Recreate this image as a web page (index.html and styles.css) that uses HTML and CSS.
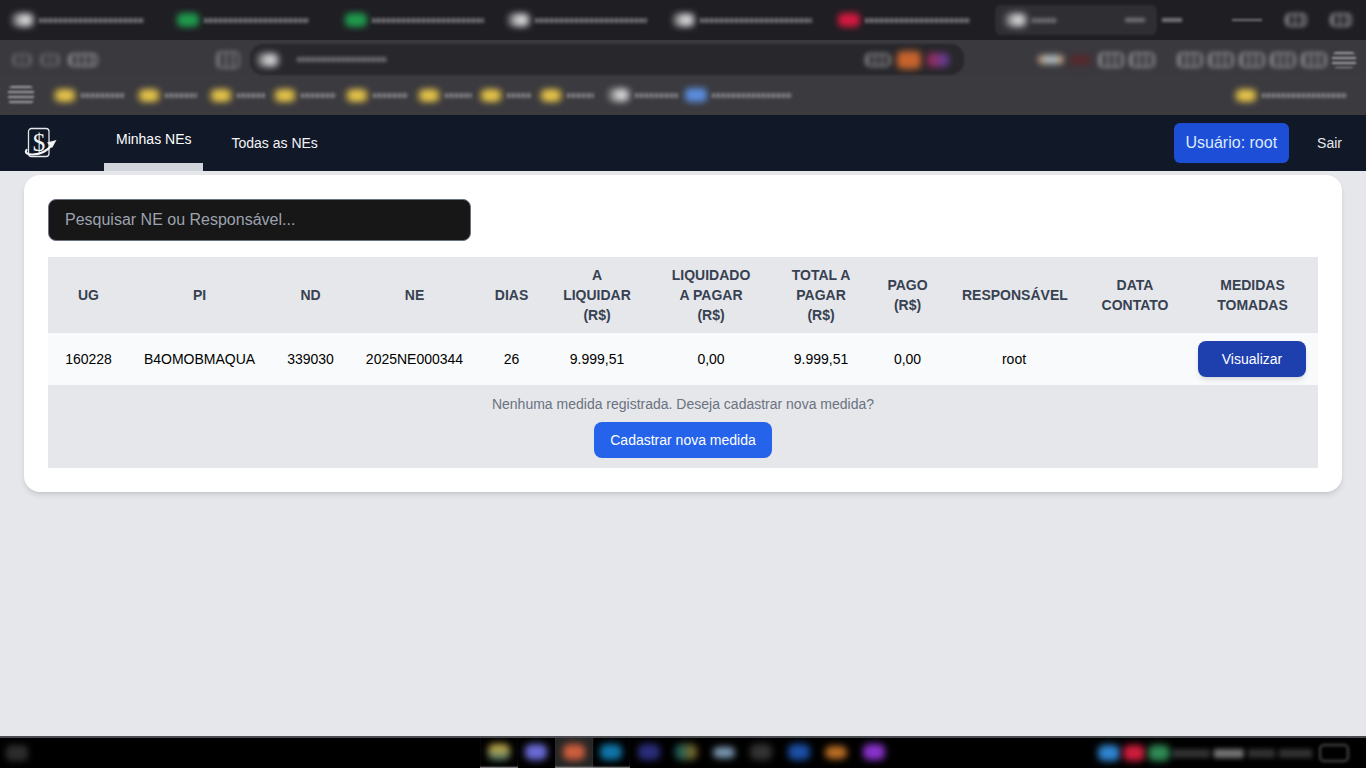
FILE: index.html
```html
<!DOCTYPE html>
<html lang="pt-BR">
<head>
<meta charset="utf-8">
<title>Minhas NEs</title>
<link rel="stylesheet" href="styles.css">
</head>
<body>
<div class="chrome" aria-hidden="true">
  <div class="tabs">
    <div class="chip"><i class="ico ring"></i><b class="txt t100"></b></div>
    <div class="chip"><i class="ico green"></i><b class="txt t100"></b></div>
    <div class="chip"><i class="ico green"></i><b class="txt t115"></b></div>
    <div class="chip"><i class="ico ring"></i><b class="txt t115"></b></div>
    <div class="chip"><i class="ico ring"></i><b class="txt t115"></b></div>
    <div class="chip"><i class="ico red"></i><b class="txt t105"></b></div>
    <div class="chip active-tab"><i class="ico ring"></i><b class="txt t25"></b><span class="grow"></span><i class="arrow"></i></div>
    <div class="chip tabs-end"><i class="arrow"></i><span class="grow"></span><i class="dash"></i><i class="ico ghost"></i><i class="ico ghost"></i></div>
  </div>
  <div class="toolbar">
    <div class="nav-icons"><i class="ico ghost dim"></i><i class="ico ghost dim"></i><i class="ico ghost wide"></i></div>
    <i class="ico ghost page-glyph"></i>
    <div class="address"><i class="ico ring"></i><b class="txt t90"></b><span class="grow"></span><i class="ico ghost"></i><i class="ico orange"></i><i class="ico violet"></i></div>
    <div class="tool-right">
      <i class="ico peach"></i><i class="ico dred"></i><i class="ico ghost"></i><i class="ico ghost"></i><span class="spacer"></span>
      <i class="ico ghost"></i><i class="ico ghost"></i><i class="ico ghost"></i><i class="ico ghost"></i><i class="ico ghost"></i><i class="ico lines"></i>
    </div>
  </div>
  <div class="bookmarks">
    <div class="chip"><i class="ico lines menu"></i></div>
    <div class="chip"><i class="ico yellow"></i><b class="txt t43"></b></div>
    <div class="chip"><i class="ico yellow"></i><b class="txt t32"></b></div>
    <div class="chip"><i class="ico yellow"></i><b class="txt t28"></b></div>
    <div class="chip"><i class="ico yellow"></i><b class="txt t35"></b></div>
    <div class="chip"><i class="ico yellow"></i><b class="txt t35"></b></div>
    <div class="chip"><i class="ico yellow"></i><b class="txt t27"></b></div>
    <div class="chip"><i class="ico yellow"></i><b class="txt t25"></b></div>
    <div class="chip"><i class="ico yellow"></i><b class="txt t27"></b></div>
    <div class="chip"><i class="ico ring"></i><b class="txt t43"></b></div>
    <div class="chip"><i class="ico blue"></i><b class="txt t80"></b></div>
    <div class="chip"><i class="ico yellow"></i><b class="txt t85"></b></div>
  </div>
</div>

<nav class="topnav">
  <a class="logo" href="#">
    <svg width="34" height="32" viewBox="0 0 34 32" fill="none">
      <rect x="4.500" y="1.500" width="20.500" height="28" rx="3" stroke="#e5e7eb" stroke-width="1.300"/>
      <text x="15" y="23.500" text-anchor="middle" class="logo-sign">$</text>
      <path d="M2.500 23c-2 3 1 4.500 6 4.500 8 0 15-4 20-10" stroke="#f3f4f6" stroke-width="2.200" stroke-linecap="round"/>
      <path d="M32.500 13l-9.500 2.500 5 5.500z" fill="#f3f4f6"/>
    </svg>
  </a>
  <a class="tab tab-on" href="#">Minhas NEs</a>
  <a class="tab" href="#">Todas as NEs</a>
  <span class="grow"></span>
  <a class="user" href="#">Usuário: root</a>
  <a class="logout" href="#">Sair</a>
</nav>

<main class="content">
  <section class="card">
    <input class="search" type="text" placeholder="Pesquisar NE ou Responsável...">
    <table class="grid">
      <colgroup>
        <col class="c1"><col class="c2"><col class="c3"><col class="c4"><col class="c5"><col class="c6">
        <col class="c7"><col class="c8"><col class="c9"><col class="c10"><col class="c11"><col class="c12">
      </colgroup>
      <thead>
        <tr>
          <th>UG</th><th>PI</th><th>ND</th><th>NE</th><th>DIAS</th>
          <th>A LIQUIDAR (R$)</th><th>LIQUIDADO A PAGAR (R$)</th><th>TOTAL A PAGAR (R$)</th>
          <th>PAGO (R$)</th><th>RESPONSÁVEL</th><th>DATA CONTATO</th><th>MEDIDAS TOMADAS</th>
        </tr>
      </thead>
      <tbody>
        <tr class="data">
          <td>160228</td><td>B4OMOBMAQUA</td><td>339030</td><td>2025NE000344</td><td>26</td>
          <td>9.999,51</td><td>0,00</td><td>9.999,51</td><td>0,00</td><td>root</td><td></td>
          <td class="action"><button class="view" type="button">Visualizar</button></td>
        </tr>
        <tr class="detail">
          <td colspan="12">
            <p class="empty">Nenhuma medida registrada. Deseja cadastrar nova medida?</p>
            <button class="add" type="button">Cadastrar nova medida</button>
          </td>
        </tr>
      </tbody>
    </table>
  </section>
</main>

<footer class="taskbar" aria-hidden="true">
  <div class="task-left"><i class="ico star"></i></div>
  <div class="task-apps">
    <span class="slot open"><i class="app amber"></i></span>
    <span class="slot"><i class="app indigo"></i></span>
    <span class="slot open hot"><i class="app coral"></i></span>
    <span class="slot open"><i class="app teal"></i></span>
    <span class="slot"><i class="app navy"></i></span>
    <span class="slot"><i class="app petrol"></i></span>
    <span class="slot"><i class="app steel"></i></span>
    <span class="slot"><i class="app slate"></i></span>
    <span class="slot"><i class="app royal"></i></span>
    <span class="slot"><i class="app orange2"></i></span>
    <span class="slot"><i class="app purple"></i></span>
  </div>
  <div class="tray">
    <i class="app sky"></i><i class="app crimson"></i><i class="app leaf"></i>
    <b class="txt t37"></b><b class="txt t30 bright"></b><b class="txt t27"></b><b class="txt t33"></b><i class="ico outline"></i>
  </div>
</footer>
</body>
</html>
```

FILE: styles.css
```css
* { box-sizing: border-box; }
html, body { height: 100%; }
body {
  margin: 0;
  height: 100vh;
  display: flex;
  flex-direction: column;
  overflow: hidden;
  background: #e5e7eb;
  font-family: "Liberation Sans", Arial, sans-serif;
  font-size: 14px;
  color: #000;
}
a { color: inherit; text-decoration: none; }
i, b { display: block; flex: none; }
.grow { flex: 1; }

/* blurred browser chrome */
.chrome { height: 115px; flex: none; overflow: hidden; background: #3b3a3f; }
.chip { display: flex; align-items: center; gap: 3px; min-width: 0; }
.ico { width: 22px; height: 14px; border-radius: 5px; filter: blur(3px); }
.txt { height: 5px; opacity: .5; filter: blur(1.800px);
  background: repeating-linear-gradient(90deg, #c2c2c4 0 3px, #77767a 3px 5px); }
.t25 { width: 25px; } .t27 { width: 27px; } .t28 { width: 28px; } .t30 { width: 30px; } .t32 { width: 32px; }
.t33 { width: 33px; } .t35 { width: 35px; } .t37 { width: 37px; } .t43 { width: 43px; } .t80 { width: 80px; }
.t85 { width: 85px; } .t90 { width: 90px; } .t100 { width: 105px; } .t105 { width: 105px; } .t115 { width: 112px; }
.ring { background: radial-gradient(circle at 60% 50%, #d4d4d6 0 25%, #77777a 70%); }
.ghost {
  background: repeating-linear-gradient(90deg, #8f8f92 0 2px, transparent 2px 7px);
  border: 2px solid #858588;
  filter: blur(2px);
}
.ghost.dim { opacity: .5; width: 20px; }
.ghost.wide { width: 30px; }
.page-glyph { width: 24px; height: 18px; margin-right: 10px; opacity: .8; }
.green { background: #1f9a4d; }
.red { background: #d3183f; }
.yellow { background: radial-gradient(circle, #e6c44a 0 40%, #a08a3c 90%); height: 13px; }
.blue { background: #5a8bdc; }
.orange { background: #c8642c; width: 24px; height: 18px; }
.violet { background: linear-gradient(90deg, #a42a55, #5a3fa0); width: 22px; height: 14px; }
.peach { background: linear-gradient(90deg, #c79a70, #a9c2d2 50%, #c79a70); width: 24px; height: 9px; }
.dred { background: #55282b; height: 10px; }
.lines { background: repeating-linear-gradient(180deg, #a5a5a7 0 2px, transparent 2px 5px); width: 24px; height: 16px; filter: blur(1.200px); }
.dash { width: 30px; height: 2px; background: #77777a; filter: blur(1px); }
.arrow { width: 20px; height: 4px; background: #77777a; filter: blur(1.500px); }

.tabs {
  height: 40px;
  padding: 0 0 0 12px;
  background: #1f1e23;
  display: grid;
  grid-template-columns: 165px 168px 163px 165px 165px 157px 162px 1fr;
  align-items: center;
  box-shadow: 0 1px 2px #2b2a2f;
}
.tabs .chip { gap: 5px; }
.active-tab { height: 30px; padding: 0 12px 0 10px; background: #2f2e33; border-radius: 6px; filter: blur(1px); }
.tabs .tabs-end { padding: 0 14px 0 5px; gap: 23px; }

.toolbar {
  height: 35px;
  padding-top: 4px;
  display: flex;
  align-items: center;
  background: #3a393e;
}
.nav-icons { width: 216px; padding-left: 12px; display: flex; gap: 8px; align-items: center; }
.address {
  width: 716px;
  height: 31px;
  display: flex;
  align-items: center;
  gap: 6px;
  padding: 0 15px 0 7px;
  border-radius: 14px;
  background: #28272b;
  filter: blur(1px);
}
.address .t90 { margin-left: 12px; }
.address .ghost { width: 26px; }
.tool-right { flex: 1; padding: 0 10px 0 74px; display: flex; align-items: center; gap: 5px; }
.tool-right .peach { width: 26px; }
.tool-right .dred { margin-right: 2px; }
.tool-right .ghost { width: 26px; height: 16px; }
.tool-right .spacer { width: 12px; }

.bookmarks {
  height: 40px;
  display: grid;
  grid-template-columns: 54px 84px 72px 64px 72px 72px 62px 60px 68px 77px 550px 1fr;
  align-items: center;
  background: #3b3a3f;
}
.bookmarks .chip { gap: 5px; }
.menu { margin-left: 8px; width: 26px; height: 18px; }

/* navbar */
.topnav {
  height: 56px;
  flex: none;
  display: flex;
  align-items: stretch;
  padding: 0 24px;
  background: #111827;
  color: #fff;
}
.logo { width: 80px; display: flex; align-items: center; }
.logo-sign { font-family: "Liberation Serif", serif; font-size: 25px; fill: #f3f4f6; }
.tab { display: flex; align-items: center; padding: 0 12px; margin-right: 16px; border-bottom: 8px solid transparent; }
.tab + .tab { border-bottom: 0; color: #f3f4f6; }
.tab-on { border-bottom-color: #d1d5db; }
.user {
  align-self: center;
  height: 40px;
  padding: 0 12px;
  display: flex;
  align-items: center;
  border-radius: 6px;
  background: #1d4ed8;
  color: #dbeafe;
  font-size: 16px;
}
.logout { align-self: center; margin-left: 28px; color: #e5e7eb; }

/* page */
.content { flex: 1; padding: 4px 24px 0; background: #e5e7eb; }
.card {
  padding: 24px;
  background: #fff;
  border-radius: 16px;
  box-shadow: 0 4px 6px -1px rgba(0,0,0,.1), 0 2px 4px -2px rgba(0,0,0,.1);
}
.search {
  display: block;
  width: 423px;
  height: 42px;
  margin-bottom: 16px;
  padding: 0 16px;
  font: 16px "Liberation Sans", Arial, sans-serif;
  color: #e5e7eb;
  background: #171717;
  border: 1px solid #6b7280;
  border-radius: 8px;
  outline: none;
}
.search::placeholder { color: #9ca3af; opacity: 1; }
.grid { width: 1270px; table-layout: fixed; border-collapse: collapse; }
.c1 { width: 81px; } .c2 { width: 141px; } .c3 { width: 81px; } .c4 { width: 127px; }
.c5 { width: 67px; } .c6 { width: 104px; } .c7 { width: 124px; } .c8 { width: 96px; }
.c9 { width: 77px; } .c10 { width: 136px; } .c11 { width: 106px; } .c12 { width: 130px; }
thead tr { background: #e5e7eb; }
th {
  padding: 8px 16px;
  font-size: 14px;
  line-height: 20px;
  font-weight: 700;
  text-align: center;
  color: #374151;
}
th:last-child { padding-right: 17px; }
.data { background: #f9fafb; }
.data td { height: 52px; padding: 8px 4px; text-align: center; line-height: 20px; }
.data .action { padding-right: 6px; }
.view {
  display: block;
  margin: 0 auto;
  width: 108px;
  height: 36px;
  border: 0;
  border-radius: 8px;
  background: #1e40af;
  color: #fff;
  font: 14px "Liberation Sans", Arial, sans-serif;
  box-shadow: 0 4px 6px -1px rgba(0,0,0,.1), 0 2px 4px -2px rgba(0,0,0,.1);
}
.detail { background: #e5e7eb; }
.detail td { padding: 9px 0 10px; text-align: center; }
.empty { margin: 0 0 8px; line-height: 20px; color: #6b7280; }
.add {
  width: 178px;
  height: 36px;
  border: 0;
  border-radius: 8px;
  background: #2563eb;
  color: #fff;
  font: 14px "Liberation Sans", Arial, sans-serif;
}

/* blurred taskbar */
.taskbar {
  height: 32px;
  flex: none;
  display: grid;
  grid-template-columns: 480px 618px 1fr;
  align-items: center;
  background: #000;
  border-top: 2px solid #4b4c50;
}
.task-left { padding-left: 6px; }
.star { width: 22px; height: 16px; background: #2c2c2c; }
.task-apps { display: flex; align-items: stretch; height: 100%; }
.slot { width: 37.500px; display: flex; align-items: center; justify-content: center; padding-bottom: 2px; }
.open { box-shadow: inset 0 -2px 2px -1px #9c9c9c; }
.hot { background: #262626; }
.app { width: 22px; height: 16px; border-radius: 6px; filter: blur(3.500px); }
.amber { background: linear-gradient(#dcb33f, #4f7a6c); }
.indigo { background: #6a6ad6; }
.coral { background: #cf5e3e; }
.teal { background: #0f76a8; }
.navy { background: #2b2d7d; }
.petrol { background: linear-gradient(90deg, #0d5d63, #8b6a1f); }
.steel { background: #7d9cb5; height: 11px; }
.slate { background: #333; }
.royal { background: #1b4fa7; }
.orange2 { background: #bd6f25; height: 13px; }
.purple { background: #8a32cc; }
.tray { display: flex; align-items: center; }
.tray .app { width: 22px; margin-right: 3px; }
.tray .txt { height: 9px; opacity: .3; margin-right: 4px; filter: blur(2.500px); }
.tray .bright { opacity: .7; }
.sky { background: #2f85d0; }
.crimson { background: #cf1d3c; }
.leaf { background: #2f8a54; }
.outline { width: 30px; height: 18px; margin-left: 3px; background: transparent; border: 2px solid #4a4a4a; filter: blur(1.500px); }
```
